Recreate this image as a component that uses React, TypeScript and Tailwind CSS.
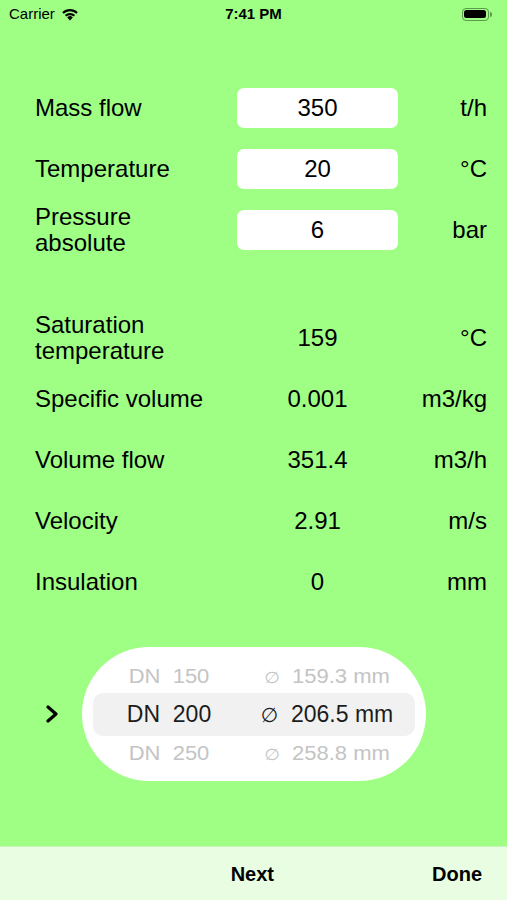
import React from "react"

const font = { fontFamily: '"Liberation Sans", Arial, sans-serif' }

const inputs = [
  { label: ["Mass flow"], value: "350", unit: "t/h" },
  { label: ["Temperature"], value: "20", unit: "°C" },
  { label: ["Pressure", "absolute"], value: "6", unit: "bar" },
]

const results = [
  { label: ["Saturation", "temperature"], value: "159", unit: "°C" },
  { label: ["Specific volume"], value: "0.001", unit: "m3/kg" },
  { label: ["Volume flow"], value: "351.4", unit: "m3/h" },
  { label: ["Velocity"], value: "2.91", unit: "m/s" },
  { label: ["Insulation"], value: "0", unit: "mm" },
]

const pipes = [
  { dn: "150", d: "159.3 mm", selected: false },
  { dn: "200", d: "206.5 mm", selected: true },
  { dn: "250", d: "258.8 mm", selected: false },
]

function Label({ lines }: { lines: string[] }) {
  return (
    <div className="leading-[26px]">
      {lines.map((l) => (
        <div key={l}>{l}</div>
      ))}
    </div>
  )
}

function StatusBar() {
  return (
    <div className="h-[28px] flex items-center justify-between px-[9px] text-black">
      <div className="flex items-center gap-[6px] text-[15px] w-[120px]">
        <span>Carrier</span>
        <svg width="18" height="13" viewBox="0 0 18 13">
          <path d="M9 12.5 L6.2 9.4 A4 4 0 0 1 11.8 9.4 Z" fill="black" />
          <path d="M3.9 7 A7.3 7.3 0 0 1 14.1 7 L12.6 8.6 A5.2 5.2 0 0 0 5.4 8.6 Z" fill="black" />
          <path d="M1.2 4.2 A11 11 0 0 1 16.8 4.2 L15.3 5.8 A8.9 8.9 0 0 0 2.7 5.8 Z" fill="black" />
        </svg>
      </div>
      <div className="text-[15px] font-bold">7:41 PM</div>
      <div className="w-[120px] flex justify-end pr-[6px]">
        <div className="flex items-center">
          <div className="w-[27px] h-[13px] rounded-[4px] border border-[#5a9a4a] p-[1.5px]">
            <div className="w-full h-full rounded-[2.5px] bg-black" />
          </div>
          <div className="w-[2px] h-[5px] rounded-r-sm bg-[#5a9a4a] ml-[1px]" />
        </div>
      </div>
    </div>
  )
}

export default function App() {
  return (
    <div className="min-h-screen h-[900px] flex flex-col bg-[#9ffe84] text-black" style={font}>
      <StatusBar />

      <div className="flex-1 flex flex-col pl-[35px] pr-[20px] pt-[49px] text-[24px]">
        {/* Inputs */}
        {inputs.map((r) => (
          <div key={r.unit} className="h-[61px] grid grid-cols-[202px_161px_1fr] items-center">
            <Label lines={r.label} />
            <div className="h-[40px] rounded-[7px] bg-white flex items-center justify-center">
              {r.value}
            </div>
            <div className="text-right">{r.unit}</div>
          </div>
        ))}

        <div className="h-[47px]" />

        {/* Results */}
        {results.map((r) => (
          <div key={r.label[0]} className="h-[61px] grid grid-cols-[202px_161px_1fr] items-center">
            <Label lines={r.label} />
            <div className="text-center">{r.value}</div>
            <div className="text-right">{r.unit}</div>
          </div>
        ))}

        {/* Pipe picker */}
        <div className="mt-[35px] flex items-center">
          <svg width="14" height="18" viewBox="0 0 14 18" className="ml-[10px] mr-[23px]">
            <polyline points="3,2 11,9 3,16" fill="none" stroke="black" strokeWidth="3.2" strokeLinecap="round" strokeLinejoin="round" />
          </svg>
          <div className="w-[344px] h-[134px] rounded-full bg-white flex flex-col justify-center px-[11px]">
            {pipes.map((p) =>
              p.selected ? (
                <div key={p.dn} className="h-[43px] rounded-[10px] bg-[#f1f1f1] grid grid-cols-[150px_1fr] items-center text-[23px] text-[#1c1c1c]">
                  <div className="text-center pl-[2px]">DN&nbsp;&nbsp;{p.dn}</div>
                  <div className="text-center pr-[4px]">
                    <span className="text-[20px]" style={{ fontFamily: '"DejaVu Sans", sans-serif' }}>∅</span>&nbsp;&nbsp;{p.d}
                  </div>
                </div>
              ) : (
                <div key={p.dn} className="h-[34px] grid grid-cols-[150px_1fr] items-center text-[22px] text-[#c4c4c4] scale-y-90">
                  <div className="text-center pl-[2px]">DN&nbsp;&nbsp;{p.dn}</div>
                  <div className="text-center pr-[4px]">
                    <span className="text-[18px]" style={{ fontFamily: '"DejaVu Sans", sans-serif' }}>∅</span>&nbsp;&nbsp;{p.d}
                  </div>
                </div>
              )
            )}
          </div>
        </div>
      </div>

      {/* Toolbar */}
      <div className="h-[54px] bg-[#e8fde2] border-t border-[#c9f5bd] flex items-center justify-end pr-[25px] text-[20px] font-bold">
        <span className="mr-[158px]">Next</span>
        <span>Done</span>
      </div>
    </div>
  )
}
